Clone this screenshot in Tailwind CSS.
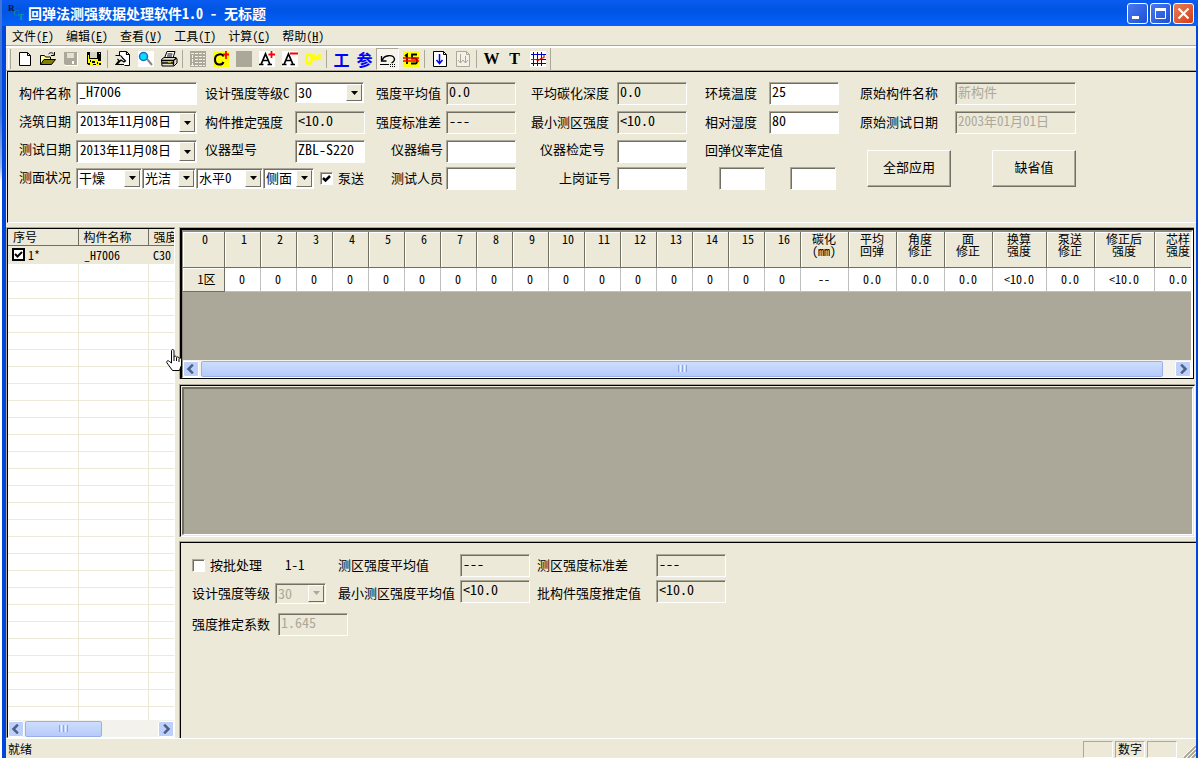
<!DOCTYPE html>
<html lang="zh-CN">
<head>
<meta charset="utf-8">
<title>回弹法测强数据处理软件1.0 - 无标题</title>
<script src="https://cdn.jsdelivr.net/npm/@tailwindcss/browser@4"></script>
</head>
<body class="h-screen overflow-hidden bg-[#ece9d8] font-['Noto_Sans_Mono_CJK_SC','Noto_Sans_CJK_SC',monospace] text-[13px] leading-4 text-black">

<svg class="hidden">
  <symbol id="left" viewBox="0 0 8 8"><path d="M5.5 .5 2 4l3.5 3.5" fill="none" stroke="#4d6185" stroke-width="2"/></symbol>
  <symbol id="right" viewBox="0 0 8 8"><path d="M2.500 .5 6 4 2.500 7.500" fill="none" stroke="#4d6185" stroke-width="2"/></symbol>
  <symbol id="down" viewBox="0 0 7 4"><path d="M0 0h7L3.500 4z" fill="currentColor"/></symbol>
</svg>

<div class="flex h-full">
  <div class="w-[2px] shrink-0 bg-linear-to-b from-[#3f74d8] from-15% via-[#9db8ea] via-22% to-white to-24%"></div>
  <div class="flex min-w-0 flex-1 flex-col">

    <header class="flex h-[26px] shrink-0 items-center bg-linear-to-b from-[#0a5cf0] via-[#0054e3] via-40% to-[#0662fb] pr-[4px] pl-[6px] text-white">
      <svg class="mr-1 h-[18px] w-4 shrink-0" viewBox="0 0 16 18"><g font-family="Liberation Serif" font-weight="bold" font-size="9"><text x="0" y="7" fill="#06143c">R</text><text x="5" y="12" fill="#10808c">C</text><text x="10" y="16" fill="#0c9aa0">T</text></g></svg>
      <h1 class="flex-1 text-sm leading-5 font-bold whitespace-pre">回弹法测强数据处理软件1.0 - 无标题</h1>
      <div class="flex gap-[2px]">
        <button aria-label="最小化" class="size-[21px] rounded-[3px] border border-white bg-linear-to-br from-[#4a78ee] to-[#1c4fd8]"><svg viewBox="0 0 19 19"><path d="M4 12h7v3H4z" fill="#fff"/></svg></button>
        <button aria-label="最大化" class="size-[21px] rounded-[3px] border border-white bg-linear-to-br from-[#4a78ee] to-[#1c4fd8]"><svg viewBox="0 0 19 19"><path d="M4.500 5v9.500h10V5z" fill="none" stroke="#fff"/><path d="M4 4h11v3H4z" fill="#fff"/></svg></button>
        <button aria-label="关闭" class="size-[21px] rounded-[3px] border border-white bg-linear-to-br from-[#ec7c56] to-[#d03c10]"><svg viewBox="0 0 19 19"><path d="m4.500 4.500 10 10m0-10-10 10" stroke="#fff" stroke-width="2.200"/></svg></button>
      </div>
    </header>

    <div class="flex min-h-0 flex-1 flex-col border-r-2 border-l-4 border-[#0046dc]">
      <nav class="flex h-5 shrink-0 items-center gap-3 border-b border-[#aca899] pl-[6px] text-xs">
        <button>文件(<u>F</u>)</button><button>编辑(<u>E</u>)</button><button>查看(<u>V</u>)</button><button>工具(<u>T</u>)</button><button>计算(<u>C</u>)</button><button>帮助(<u>H</u>)</button>
      </nav>

      <div class="flex h-[25px] shrink-0 items-center border-t-2 border-b border-t-white border-b-[#aca899] pl-[2px]">
        <span class="mr-[2px] h-5 w-[3px] border-r border-l border-l-white border-r-[#aca899]"></span>
        <button aria-label="新建" class="flex w-[23px] justify-center"><svg class="size-4" viewBox="0 0 16 16"><path d="M2.500 1.500h8l3 3v10h-11z" fill="#fff" stroke="#000"/><path d="M10.500 1.500v3h3" fill="none" stroke="#000"/></svg></button>
        <button aria-label="打开" class="flex w-[23px] justify-center"><svg class="size-4" viewBox="0 0 16 16"><path d="M.5 13.500v-9h4l1 1.500h5v2" fill="#ffff9a" stroke="#000"/><path d="M.5 13.500 4 8.500h11.500l-4 5z" fill="#808000" stroke="#000"/><path d="M8.500 3c2-2 4-1.500 5.500.5M14.500 1v3.500H11" fill="none" stroke="#000"/></svg></button>
        <button aria-label="保存" disabled class="flex w-[23px] justify-center"><svg class="size-4" viewBox="0 0 16 16"><path d="M1 1h13v13H2.500L1 12.500z" fill="#aca899"/><path d="M4 2h7v5H4z" fill="#e4e1d0"/><path d="M9 10h2v3H9z" fill="#fff"/><path d="M14.500 2v12.500H2" fill="none" stroke="#fff"/></svg></button>
        <button aria-label="全部保存" class="flex w-[23px] justify-center"><svg class="size-4" viewBox="0 0 16 16"><path d="M1 1h14v13H2.500L1 12.500z" fill="#000"/><path d="M4 1h7v6H4z" fill="#d8d5c4"/><path d="M2 4h1v4h9v2h3v2h-2v3h-3v-2H7v2H4v-3H2zM13 2h1v1h-1z" fill="#ff0"/><path d="M6 10h3v2H6zm5 1h1v2h-1zM4 9h1v2H4z" fill="#000"/></svg></button>
        <span class="mr-[3px] ml-[2px] h-[18px] w-px bg-[#aca899]"></span>
        <button aria-label="导出" class="flex w-[23px] justify-center"><svg class="size-4" viewBox="0 0 16 16"><path d="M4.500 4V.5h7l3 3v11h-5" fill="#fff" stroke="#000"/><path d="M11.500 .5v3h3M.5 4.500h4c2 0 2 1 3 2.500l3 3-1.500 1-3-2-4 4.500H1L4 9.500 2.500 8M2 13.500h7" fill="none" stroke="#000" stroke-width="1.200"/></svg></button>
        <button aria-label="预览" class="flex w-[23px] justify-center"><svg class="size-4" viewBox="0 0 16 16"><path d="M0 0h16v16H0z" fill="#fff"/><path d="m9 8 5 6" stroke="#888" stroke-width="2"/><circle cx="5.500" cy="5.500" r="4" fill="#00e0ff" stroke="#1a6bd0" stroke-width="1.500"/></svg></button>
        <button aria-label="打印" class="flex w-[23px] justify-center"><svg class="size-[18px]" viewBox="0 0 18 18"><path d="M4.500 8 7 1.500h8L13 8" fill="#fff" stroke="#000"/><path d="M7.500 4h5M7 6h5" stroke="#000"/><path d="M1.500 9.500 4 7.500h12l1 1.500v4l-3 3h-12z" fill="#e4e1d0" stroke="#000"/><path d="M1.500 10.500h12v5M13.500 10.500l3-2.500M2 13h12" fill="none" stroke="#000" stroke-width="1.300"/><path d="M8 12h3" stroke="#ff0"/></svg></button>
        <span class="mr-[3px] ml-[2px] h-[18px] w-px bg-[#aca899]"></span>
        <button aria-label="数据表" disabled class="flex w-[23px] justify-center"><svg class="size-4" viewBox="0 0 16 16"><path d="M0 0h16v16H0z" fill="#aca899"/><path d="M1 2.500h14M5 5.500h10M5 8.500h10M5 11.500h10M2.500 4v10M1 14.500h14" stroke="#f4f2e8" stroke-dasharray="3 1"/></svg></button>
        <button aria-label="添加构件" class="flex w-[23px] justify-center"><svg class="size-4" viewBox="0 0 16 16"><path d="M0 0h16v16H0z" fill="#ff0"/><path d="M10.500 5.500C9.500 2.500 2 2 2 8.500s7 6 8.500 2.500" fill="none" stroke="#000" stroke-width="2"/><path d="M13 0v8M10 3.500h6" stroke="#f00" stroke-width="1.800"/></svg></button>
        <button aria-label="删除构件" disabled class="flex w-[23px] justify-center"><span class="size-4 bg-[#aca899]"></span></button>
        <button aria-label="添加测区" class="flex w-[23px] justify-center"><svg class="size-4" viewBox="0 0 16 16"><path d="M0 0h16v16H0z" fill="#fff"/><path d="M2 13.500 6.500 3 11 13.500M4 9.500h5M0 13.500h4.500M8.500 13.500H13" fill="none" stroke="#000" stroke-width="1.700"/><path d="M12.500 0v7M9.500 3.500H16" stroke="#f00" stroke-width="1.800"/></svg></button>
        <button aria-label="删除测区" class="flex w-[23px] justify-center"><svg class="size-4" viewBox="0 0 16 16"><path d="M0 0h16v16H0z" fill="#fff"/><path d="M2 13.500 6.500 3 11 13.500M4 9.500h5M0 13.500h4.500M8.500 13.500H13" fill="none" stroke="#000" stroke-width="1.700"/><path d="M8 2.500h8" stroke="#f00" stroke-width="2"/></svg></button>
        <button aria-label="密钥" class="flex w-[23px] justify-center"><svg class="size-4" viewBox="0 0 16 16"><path d="M2.500 3.500h3l1 2v5l-1 2h-3l-1-2v-5zM8.500 3v5h2.500V4.500M11 7.500h3.500V3" fill="none" stroke="#ff0" stroke-width="2.400"/></svg></button>
        <span class="mr-[3px] ml-[2px] h-[18px] w-px bg-[#aca899]"></span>
        <button class="w-[23px] text-center text-base leading-5 font-bold text-[#0000ff]">工</button>
        <button class="w-[23px] text-center text-base leading-5 font-bold text-[#0000ff]">参</button>
        <button aria-label="撤销" class="flex h-[22px] w-[23px] items-center justify-center border border-t-[#aca899] border-r-white border-b-white border-l-[#aca899] bg-[#f6f4ec]"><svg class="size-4" viewBox="0 0 16 16"><path d="M1.500 5v5h5M2.500 9c1-5 11-6 12-1 0 2-1 3-3 4" fill="none" stroke="#000" stroke-width="1.300"/><path d="M0 13.500h9" stroke="#000"/><path d="M10 13.500h6M10 15.500h6" stroke="#000" stroke-dasharray="1 1"/></svg></button>
        <button aria-label="剔除" class="flex w-[23px] justify-center"><svg class="size-4" viewBox="0 0 16 16"><path d="M0 0h16v16H0z" fill="#ff0"/><path d="M2 5l2-1.500V13M14 3.500H9v4h3.500c2 0 2 5 0 5H8" fill="none" stroke="#000" stroke-width="1.800"/><path d="M0 7h16M0 10h16" stroke="#f00" stroke-width="1.300"/></svg></button>
        <span class="mr-[3px] ml-[2px] h-[18px] w-px bg-[#aca899]"></span>
        <button aria-label="下载" class="flex w-[23px] justify-center"><svg class="size-4" viewBox="0 0 16 16"><path d="M1.500 .5h10l3 3v12h-13z" fill="#fff" stroke="#000"/><path d="M11.500 .5v3h3" fill="none" stroke="#000"/><path d="M7.500 3v9M4.500 9l3 3.500 3-3.500" fill="none" stroke="#00f" stroke-width="1.500"/></svg></button>
        <button aria-label="全部下载" disabled class="flex w-[23px] justify-center"><svg class="size-4" viewBox="0 0 16 16"><path d="M1.500 .5h10l3 3v12h-13z" fill="#f4f2e8" stroke="#aca899"/><path d="M11.500 .5v3h3M5.500 3v9M10.500 5v7M3 9l2.500 3 2.500-3 2.500 3L13 9" fill="none" stroke="#aca899"/></svg></button>
        <span class="mr-[3px] ml-[2px] h-[18px] w-px bg-[#aca899]"></span>
        <button class="w-[23px] text-center font-['Liberation_Serif',serif] text-base leading-5 font-bold">W</button>
        <button class="w-[23px] text-center font-['Liberation_Serif',serif] text-base leading-5 font-bold">T</button>
        <button aria-label="曲线" class="flex w-[23px] justify-center"><svg class="size-4" viewBox="0 0 16 16"><path d="M0 0h16v16H0z" fill="#fff"/><path d="M3.500 1v14M7.500 1v14M11.500 1v14M1 3.500h15M1 8.500h15M1 12.500h15" stroke="#00c"/><path d="M1 8.500h5l2 1 3-2 3-1V4" fill="none" stroke="#f00" stroke-width="1.200"/></svg></button>
        <span class="ml-[1px] h-[22px] w-px bg-[#aca899]"></span>
      </div>

      <!-- component parameters -->
      <form class="ml-px grid shrink-0 auto-rows-max grid-cols-[57px_129px_90px_81px_70px_85px_86px_88px_64px_91px_95px_121px] grid-rows-[29px_29px_27px_23px] items-start border-t border-b border-l border-t-black border-b-white border-l-black pt-[10px] pb-[32px] pl-[11px] *:[label]:whitespace-nowrap">
        <label for="a1" class="leading-[22px]">构件名称</label>
        <input id="a1" value="_H7006" class="h-[23px] w-[121px] border border-t-[#aca899] border-r-white border-b-white border-l-[#aca899] bg-white px-[2px] pb-[5px] text-sm shadow-[inset_1px_1px_0_#716f64]">
        <label for="b1" class="leading-[22px]">设计强度等级C</label>
        <div class="flex h-[21px] w-[69px] border border-t-[#aca899] border-r-white border-b-white border-l-[#aca899] bg-white p-px shadow-[inset_1px_1px_0_#716f64]"><select id="b1" class="min-w-0 flex-1 appearance-none pb-[2px] pl-px text-sm leading-4"><option>30</option></select><span class="flex w-4 items-center justify-center border border-t-white border-r-[#716f64] border-b-[#716f64] border-l-white bg-[#ece9d8]"><svg class="h-1 w-[7px]"><use href="#down"/></svg></span></div>
        <label for="c1" class="leading-[22px]">强度平均值</label>
        <input id="c1" readonly value="0.0" class="h-[23px] w-[70px] border border-t-[#aca899] border-r-white border-b-white border-l-[#aca899] px-[2px] pb-[5px] text-sm shadow-[inset_1px_1px_0_#716f64]">
        <label for="d1" class="leading-[22px]">平均碳化深度</label>
        <input id="d1" readonly value="0.0" class="h-[23px] w-[70px] border border-t-[#aca899] border-r-white border-b-white border-l-[#aca899] px-[2px] pb-[5px] text-sm shadow-[inset_1px_1px_0_#716f64]">
        <label for="e1" class="leading-[22px]">环境温度</label>
        <input id="e1" value="25" class="h-[23px] w-[70px] border border-t-[#aca899] border-r-white border-b-white border-l-[#aca899] bg-white px-[2px] pb-[5px] text-sm shadow-[inset_1px_1px_0_#716f64]">
        <label for="f1" class="leading-[22px]">原始构件名称</label>
        <input id="f1" disabled value="新构件" class="h-[23px] w-[121px] border border-t-[#aca899] border-r-white border-b-white border-l-[#aca899] px-[2px] pb-[5px] text-[#aca899] shadow-[inset_1px_1px_0_#716f64]">

        <label for="a2" class="leading-[20px]">浇筑日期</label>
        <div class="flex h-[23px] w-[121px] border border-t-[#aca899] border-r-white border-b-white border-l-[#aca899] bg-white p-px shadow-[inset_1px_1px_0_#716f64]"><select id="a2" class="min-w-0 flex-1 appearance-none pb-[4px] pl-[2px] leading-4"><option>2013年11月08日</option></select><span class="flex w-4 items-center justify-center border border-t-white border-r-[#716f64] border-b-[#716f64] border-l-white bg-[#ece9d8]"><svg class="h-1 w-[7px]"><use href="#down"/></svg></span></div>
        <label for="b2" class="leading-[22px]">构件推定强度</label>
        <input id="b2" readonly value="&lt;10.0" class="h-[23px] w-[70px] border border-t-[#aca899] border-r-white border-b-white border-l-[#aca899] px-[2px] pb-[5px] text-sm shadow-[inset_1px_1px_0_#716f64]">
        <label for="c2" class="leading-[22px]">强度标准差</label>
        <input id="c2" readonly value="---" class="h-[23px] w-[70px] border border-t-[#aca899] border-r-white border-b-white border-l-[#aca899] px-[2px] pb-[5px] text-sm shadow-[inset_1px_1px_0_#716f64]">
        <label for="d2" class="leading-[22px]">最小测区强度</label>
        <input id="d2" readonly value="&lt;10.0" class="h-[23px] w-[70px] border border-t-[#aca899] border-r-white border-b-white border-l-[#aca899] px-[2px] pb-[5px] text-sm shadow-[inset_1px_1px_0_#716f64]">
        <label for="e2" class="leading-[22px]">相对湿度</label>
        <input id="e2" value="80" class="h-[23px] w-[70px] border border-t-[#aca899] border-r-white border-b-white border-l-[#aca899] bg-white px-[2px] pb-[5px] text-sm shadow-[inset_1px_1px_0_#716f64]">
        <label for="f2" class="leading-[22px]">原始测试日期</label>
        <input id="f2" disabled value="2003年01月01日" class="h-[23px] w-[121px] border border-t-[#aca899] border-r-white border-b-white border-l-[#aca899] px-[2px] pb-[5px] text-[#aca899] shadow-[inset_1px_1px_0_#716f64]">

        <label for="a3" class="leading-[18px]">测试日期</label>
        <div class="flex h-[23px] w-[121px] border border-t-[#aca899] border-r-white border-b-white border-l-[#aca899] bg-white p-px shadow-[inset_1px_1px_0_#716f64]"><select id="a3" class="min-w-0 flex-1 appearance-none pb-[4px] pl-[2px] leading-4"><option>2013年11月08日</option></select><span class="flex w-4 items-center justify-center border border-t-white border-r-[#716f64] border-b-[#716f64] border-l-white bg-[#ece9d8]"><svg class="h-1 w-[7px]"><use href="#down"/></svg></span></div>
        <label for="b3" class="leading-[18px]">仪器型号</label>
        <input id="b3" value="ZBL-S220" class="h-[23px] w-[70px] border border-t-[#aca899] border-r-white border-b-white border-l-[#aca899] bg-white px-[2px] pb-[5px] text-sm shadow-[inset_1px_1px_0_#716f64]">
        <label for="c3" class="pl-[15px] leading-[18px]">仪器编号</label>
        <input id="c3" class="h-[23px] w-[70px] border border-t-[#aca899] border-r-white border-b-white border-l-[#aca899] bg-white px-[2px] text-sm shadow-[inset_1px_1px_0_#716f64]">
        <label for="d3" class="pl-[9px] leading-[18px]">仪器检定号</label>
        <input id="d3" class="h-[23px] w-[70px] border border-t-[#aca899] border-r-white border-b-white border-l-[#aca899] bg-white px-[2px] text-sm shadow-[inset_1px_1px_0_#716f64]">
        <label for="e3" class="col-span-2 leading-[20px]">回弹仪率定值</label>
        <div class="col-span-2 row-span-2 flex gap-[41px] pt-[10px] pl-[7px]">
          <button type="button" class="h-[37px] w-[84px] border border-t-white border-r-[#716f64] border-b-[#716f64] border-l-white pb-[4px] shadow-[inset_-1px_-1px_0_#aca899]">全部应用</button>
          <button type="button" class="h-[37px] w-[84px] border border-t-white border-r-[#716f64] border-b-[#716f64] border-l-white pb-[4px] shadow-[inset_-1px_-1px_0_#aca899]">缺省值</button>
        </div>

        <label for="a4" class="leading-[20px]">测面状况</label>
        <div class="col-span-3 flex items-center">
          <div class="flex h-[21px] w-[66px] border border-t-[#aca899] border-r-white border-b-white border-l-[#aca899] bg-white p-px shadow-[inset_1px_1px_0_#716f64]"><select id="a4" class="min-w-0 flex-1 appearance-none pl-px leading-4"><option>干燥</option></select><span class="flex w-4 items-center justify-center border border-t-white border-r-[#716f64] border-b-[#716f64] border-l-white bg-[#ece9d8]"><svg class="h-1 w-[7px]"><use href="#down"/></svg></span></div>
          <div class="flex h-[21px] w-[54px] border border-t-[#aca899] border-r-white border-b-white border-l-[#aca899] bg-white p-px shadow-[inset_1px_1px_0_#716f64]"><select aria-label="表面" class="min-w-0 flex-1 appearance-none pl-px leading-4"><option>光洁</option></select><span class="flex w-4 items-center justify-center border border-t-white border-r-[#716f64] border-b-[#716f64] border-l-white bg-[#ece9d8]"><svg class="h-1 w-[7px]"><use href="#down"/></svg></span></div>
          <div class="flex h-[21px] w-[67px] border border-t-[#aca899] border-r-white border-b-white border-l-[#aca899] bg-white p-px shadow-[inset_1px_1px_0_#716f64]"><select aria-label="角度" class="min-w-0 flex-1 appearance-none pl-px leading-4"><option>水平0</option></select><span class="flex w-4 items-center justify-center border border-t-white border-r-[#716f64] border-b-[#716f64] border-l-white bg-[#ece9d8]"><svg class="h-1 w-[7px]"><use href="#down"/></svg></span></div>
          <div class="flex h-[21px] w-[51px] border border-t-[#aca899] border-r-white border-b-white border-l-[#aca899] bg-white p-px shadow-[inset_1px_1px_0_#716f64]"><select aria-label="测面" class="min-w-0 flex-1 appearance-none pl-px leading-4"><option>侧面</option></select><span class="flex w-4 items-center justify-center border border-t-white border-r-[#716f64] border-b-[#716f64] border-l-white bg-[#ece9d8]"><svg class="h-1 w-[7px]"><use href="#down"/></svg></span></div>
          <label class="ml-[6px] flex items-center gap-[5px] leading-[22px]"><span class="grid"><input type="checkbox" checked class="peer col-start-1 row-start-1 size-[13px] appearance-none border border-t-[#aca899] border-r-white border-b-white border-l-[#aca899] bg-white shadow-[inset_1px_1px_0_#716f64]"><svg class="pointer-events-none invisible col-start-1 row-start-1 size-[13px] peer-checked:visible" viewBox="0 0 13 13"><path d="m3 6 2.500 2.500L10 4" fill="none" stroke="#000" stroke-width="2.500"/></svg></span>泵送</label>
        </div>
        <label for="c4" class="pl-[15px] leading-[22px]">测试人员</label>
        <input id="c4" class="h-[23px] w-[70px] border border-t-[#aca899] border-r-white border-b-white border-l-[#aca899] bg-white px-[2px] text-sm shadow-[inset_1px_1px_0_#716f64]">
        <label for="d4" class="pl-[28px] leading-[22px]">上岗证号</label>
        <input id="d4" class="h-[23px] w-[70px] border border-t-[#aca899] border-r-white border-b-white border-l-[#aca899] bg-white px-[2px] text-sm shadow-[inset_1px_1px_0_#716f64]">
        <div class="col-span-2 flex gap-[25px] pl-[14px]">
          <input id="e3" class="h-[23px] w-[46px] border border-t-[#aca899] border-r-white border-b-white border-l-[#aca899] bg-white px-[2px] text-sm shadow-[inset_1px_1px_0_#716f64]">
          <input aria-label="率定值二" class="h-[23px] w-[46px] border border-t-[#aca899] border-r-white border-b-white border-l-[#aca899] bg-white px-[2px] text-sm shadow-[inset_1px_1px_0_#716f64]">
        </div>
      </form>

      <div class="mt-1 flex min-h-0 flex-1">
        <!-- component list -->
        <aside class="relative mr-1 flex w-[169px] shrink-0 flex-col border-t border-l border-[#aca899]">
          <div class="flex min-h-0 flex-1 flex-col border border-t-black border-r-white border-b-white border-l-black bg-white">
            <div class="min-h-0 flex-1 overflow-hidden">
              <table class="w-[190px] table-fixed border-collapse text-xs">
                <colgroup><col class="w-[70px]"><col class="w-[70px]"><col class="w-[50px]"></colgroup>
                <thead class="bg-[#ece9d8] text-left leading-[14px]"><tr class="h-4"><th class="border-r border-b border-[#716f64] p-0 pl-[5px] font-normal">序号</th><th class="border-r border-b border-[#716f64] p-0 pl-[5px] font-normal">构件名称</th><th class="border-b border-[#716f64] p-0 pl-[5px] font-normal">强度</th></tr></thead>
                <tbody id="list">
                  <tr class="h-[19px] bg-[#ece9d8]"><td class="p-0 pl-[4px]"><label class="flex items-center gap-[3px]"><span class="grid"><input type="checkbox" checked class="peer col-start-1 row-start-1 size-[13px] appearance-none border-2 border-black bg-white"><svg class="pointer-events-none invisible col-start-1 row-start-1 size-[13px] peer-checked:visible" viewBox="0 0 13 13"><path d="m3 6 2.500 2.500L10 4" fill="none" stroke="#000" stroke-width="2"/></svg></span>1*</label></td><td class="p-0 pl-[6px]">_H7006</td><td class="p-0 pl-[5px]">C30</td></tr>
                </tbody>
              </table>
            </div>
            <div class="flex h-[17px] shrink-0 items-center bg-[#f3f2ec]">
              <button aria-label="向左滚动" class="flex size-4 items-center justify-center rounded-[2px] border border-white bg-[#bdcffb]"><svg class="size-[10px]"><use href="#left"/></svg></button>
              <div class="flex flex-1 px-px"><span class="flex h-4 w-[77px] items-center justify-center gap-px rounded-[2px] border border-[#98b0e8] bg-linear-to-b from-[#cdddfd] to-[#b6cbf9]"><i class="h-[7px] w-px bg-[#8ba6e6]"></i><i class="h-[7px] w-px bg-[#eef4fe]"></i><i class="h-[7px] w-px bg-[#8ba6e6]"></i><i class="h-[7px] w-px bg-[#eef4fe]"></i><i class="h-[7px] w-px bg-[#8ba6e6]"></i></span></div>
              <button aria-label="向右滚动" class="flex size-4 items-center justify-center rounded-[2px] border border-white bg-[#bdcffb]"><svg class="size-[10px]"><use href="#right"/></svg></button>
            </div>
          </div>
          <svg class="absolute top-[121px] -right-[8px] z-10 h-[22px] w-[17px]" viewBox="0 0 17 22"><path d="M5.500 14V2c0-2 2.500-2 2.500 0v6c.5-1.500 2.500-1 2.500.5.5-1 2.500-.7 2.500 1 .8-1 2.500-.5 2.500 1V16l-2 5.500H6.500L1 14c-1-2 1-3 2.500-1.500z" fill="#fff" stroke="#000"/><path d="M8 8v4M10.500 9v3M13 10v3" stroke="#000"/></svg>
        </aside>

        <main class="flex min-w-0 flex-1 flex-col">
          <section class="mr-[2px] border-t border-l border-[#aca899]">
            <div class="border-t-2 border-r border-b border-l-2 border-black">
              <div class="border-t-2 border-r-2 border-b border-l border-t-[#8f8c7f] border-r-white border-b-white border-l-[#8f8c7f] bg-[#aca899]">
                <div class="h-[128px] overflow-hidden">
                  <table class="w-[1020px] table-fixed border-separate border-spacing-0 text-center text-xs">
                    <colgroup id="cols"></colgroup>
                    <thead><tr id="head" class="h-9 align-top leading-3"></tr></thead>
                    <tbody><tr id="data" class="h-6"></tr></tbody>
                  </table>
                </div>
                <div class="flex h-[17px] items-center bg-[#f3f2ec]">
                  <button aria-label="向左滚动" class="flex size-4 items-center justify-center rounded-[2px] border border-white bg-[#bdcffb]"><svg class="size-[10px]"><use href="#left"/></svg></button>
                  <div class="flex flex-1 pr-3 pl-[2px]"><span class="flex h-4 flex-1 items-center justify-center gap-px rounded-[2px] border border-[#98b0e8] bg-linear-to-b from-[#cdddfd] to-[#b6cbf9]"><i class="h-[7px] w-px bg-[#8ba6e6]"></i><i class="h-[7px] w-px bg-[#eef4fe]"></i><i class="h-[7px] w-px bg-[#8ba6e6]"></i><i class="h-[7px] w-px bg-[#eef4fe]"></i><i class="h-[7px] w-px bg-[#8ba6e6]"></i></span></div>
                  <button aria-label="向右滚动" class="flex size-4 items-center justify-center rounded-[2px] border border-white bg-[#bdcffb]"><svg class="size-[10px]"><use href="#right"/></svg></button>
                </div>
              </div>
            </div>
          </section>

          <section class="mt-[5px] mr-px border-t border-l border-[#aca899]">
            <div class="border border-t-black border-r-white border-b-white border-l-black p-px">
              <div class="h-[148px] border-t-2 border-r border-b border-l-2 border-t-[#716f64] border-r-white border-b-white border-l-[#716f64] bg-[#aca899]"></div>
            </div>
          </section>

          <!-- batch results -->
          <section class="mt-[4px] flex-1 border-t border-l border-[#aca899]">
            <div class="h-full border-t border-l border-black pt-[11px] pl-[11px]">
              <div class="grid grid-cols-[146px_122px_77px_119px_70px] grid-rows-[26px_33px_23px] items-start whitespace-nowrap">
                <div class="flex h-[22px] items-center"><label class="flex items-center gap-[5px]"><input type="checkbox" class="size-[13px] appearance-none border border-t-[#aca899] border-r-white border-b-white border-l-[#aca899] bg-white shadow-[inset_1px_1px_0_#716f64]">按批处理</label><span class="ml-[23px]">1-1</span></div>
                <label for="g1" class="leading-[22px]">测区强度平均值</label>
                <input id="g1" readonly value="---" class="h-[23px] w-[70px] border border-t-[#aca899] border-r-white border-b-white border-l-[#aca899] px-[2px] pb-[5px] text-sm shadow-[inset_1px_1px_0_#716f64]">
                <label for="h1" class="leading-[22px]">测区强度标准差</label>
                <input id="h1" readonly value="---" class="h-[23px] w-[70px] border border-t-[#aca899] border-r-white border-b-white border-l-[#aca899] px-[2px] pb-[5px] text-sm shadow-[inset_1px_1px_0_#716f64]">

                <div class="flex h-[26px] items-center gap-[5px]"><label for="k1">设计强度等级</label><div class="flex h-[21px] w-[51px] border border-t-[#aca899] border-r-white border-b-white border-l-[#aca899] p-px text-[#aca899] shadow-[inset_1px_1px_0_#716f64]"><select id="k1" disabled class="min-w-0 flex-1 appearance-none pb-[2px] pl-px text-sm leading-4 text-[#aca899] opacity-100"><option>30</option></select><span class="flex w-4 items-center justify-center border border-t-white border-r-[#716f64] border-b-[#716f64] border-l-white"><svg class="h-1 w-[7px]"><use href="#down"/></svg></span></div></div>
                <label for="g2" class="leading-[26px]">最小测区强度平均值</label>
                <input id="g2" readonly value="&lt;10.0" class="h-[23px] w-[70px] border border-t-[#aca899] border-r-white border-b-white border-l-[#aca899] px-[2px] pb-[5px] text-sm shadow-[inset_1px_1px_0_#716f64]">
                <label for="h2" class="leading-[26px]">批构件强度推定值</label>
                <input id="h2" readonly value="&lt;10.0" class="h-[23px] w-[70px] border border-t-[#aca899] border-r-white border-b-white border-l-[#aca899] px-[2px] pb-[5px] text-sm shadow-[inset_1px_1px_0_#716f64]">

                <div class="col-span-2 flex h-[22px] items-center gap-[8px]"><label for="k2">强度推定系数</label><input id="k2" disabled value="1.645" class="h-[23px] w-[70px] border border-t-[#aca899] border-r-white border-b-white border-l-[#aca899] px-[2px] pb-[5px] text-sm text-[#aca899] shadow-[inset_1px_1px_0_#716f64]"></div>
              </div>
            </div>
          </section>
        </main>
      </div>

      <footer class="flex h-5 shrink-0 items-end gap-[2px] border-t border-white pl-[2px] text-xs">
        <span class="flex-1 leading-[18px]">就绪</span>
        <span class="h-[17px] w-[30px] border border-t-[#aca899] border-r-white border-b-white border-l-[#aca899]"></span>
        <span class="h-[17px] w-[30px] border border-t-[#aca899] border-r-white border-b-white border-l-[#aca899] text-center leading-[14px]">数字</span>
        <span class="h-[17px] w-[30px] border border-t-[#aca899] border-r-white border-b-white border-l-[#aca899]"></span>
        <svg class="ml-[4px] h-[13px] w-[13px]" viewBox="0 0 13 13"><path d="M1 13 13 1M5 13l8-8M9 13l4-4" stroke="#aca899" stroke-width="2"/><path d="M-1 13 13-1M3 13 13 3M7 13l6-6" stroke="#fff"/></svg>
      </footer>
    </div>
  </div>
</div>

<script>
  const tail = [['碳化<br>(mm)', '--', 48], ['平均<br>回弹', '0.0', 48], ['角度<br>修正', '0.0', 48], ['面<br>修正', '0.0', 48], ['换算<br>强度', '&lt;10.0', 54], ['泵送<br>修正', '0.0', 48], ['修正后<br>强度', '&lt;10.0', 60], ['芯样<br>强度', '0.0', 48]];
  const cols = [['0', '1区', 42]];
  for (let i = 1; i <= 16; i++) cols.push([String(i), '0', 36]);
  cols.push(...tail);
  document.getElementById('cols').innerHTML = cols.map(c => `<col style="width:${c[2]}px">`).join('');
  document.getElementById('head').innerHTML = cols.map((c, i) => `<th class="border-r border-b border-r-[#716f64] border-b-[#716f64] bg-[#ece9d8] p-0 pt-px font-normal shadow-[inset_1px_1px_0_#fff] ${i < 17 ? 'pl-[3px]' : 'pr-px'}">${c[0]}</th>`).join('');
  document.getElementById('data').innerHTML = cols.map((c, i) => i
    ? `<td class="border-r border-b border-[#c0c0c0] bg-white p-0 pr-px pb-[2px]">${c[1]}</td>`
    : `<th class="border-r border-b border-[#716f64] bg-[#ece9d8] p-0 pb-[2px] pl-[6px] font-normal shadow-[inset_1px_1px_0_#fff]">${c[1]}</th>`).join('');
  document.getElementById('list').insertAdjacentHTML('beforeend',
    '<tr class="h-[17px]"><td class="border-r border-b border-[#ece9d8] p-0"></td><td class="border-r border-b border-[#ece9d8] p-0"></td><td class="border-b border-[#ece9d8] p-0"></td></tr>'.repeat(27));
</script>
</body>
</html>
